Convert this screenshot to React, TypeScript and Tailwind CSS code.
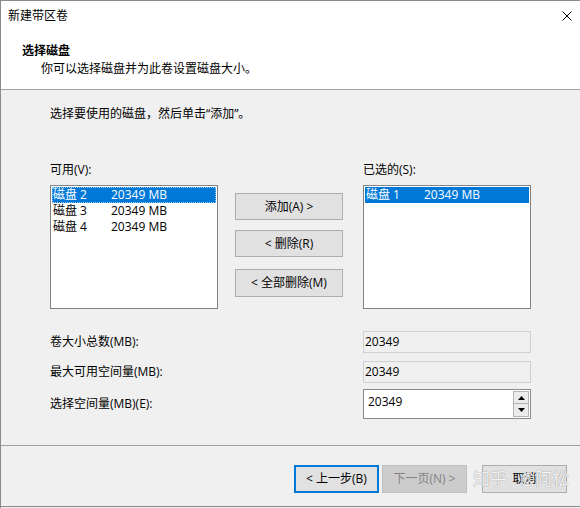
import React from "react";

const FONT = '"Open Sans", "Noto Sans CJK SC", sans-serif';

type Disk = { name: string; size: string };

const available: Disk[] = [
  { name: "磁盘 2", size: "20349 MB" },
  { name: "磁盘 3", size: "20349 MB" },
  { name: "磁盘 4", size: "20349 MB" },
];

const selected: Disk[] = [{ name: "磁盘 1", size: "20349 MB" }];

function DiskList({ items, focused }: { items: Disk[]; focused?: boolean }) {
  return (
    <div className="w-[168px] h-[124px] border border-[#828282] bg-white p-px">
      {items.map((d, i) => {
        const active = i === 0;
        return (
          <div
            key={d.name}
            className={
              "flex h-[16px] items-center leading-[16px] " +
              (active
                ? "bg-[#0078d7] text-white " +
                  (focused ? "outline outline-1 outline-dotted outline-[#9cc8ee] -outline-offset-1" : "")
                : "text-black")
            }
          >
            <span className="w-[59px] pl-px">{d.name}</span>
            <span>{d.size}</span>
          </div>
        );
      })}
    </div>
  );
}

function MoveButton({ label, className = "" }: { label: string; className?: string }) {
  return (
    <div
      className={
        "flex w-[108px] items-center justify-center border border-[#adadad] bg-[#e1e1e1] text-black " +
        className
      }
    >
      {label}
    </div>
  );
}

function SpinArrow({ up }: { up?: boolean }) {
  return (
    <svg width="7" height="4" viewBox="0 0 7 4">
      {up ? <polygon points="3.5,0 7,4 0,4" fill="#000" /> : <polygon points="0,0 7,0 3.5,4" fill="#000" />}
    </svg>
  );
}

export default function App() {
  return (
    <div
      className="relative flex h-[508px] w-[580px] flex-col overflow-hidden border-l border-t border-[#8a8a8a] bg-[#f0f0f0] text-[12px] leading-[16px] text-black"
      style={{ fontFamily: FONT }}
    >
      {/* header */}
      <div className="h-[89px] border-b border-[#a0a0a0] bg-white">
        <div className="flex h-[29px] items-center justify-between pl-[7px] pr-[8px]">
          <span>新建带区卷</span>
          <svg width="10" height="10" viewBox="0 0 10 10">
            <path d="M0.5 0.5 L9.5 9.5 M9.5 0.5 L0.5 9.5" stroke="#000" strokeWidth="1" />
          </svg>
        </div>
        <div className="mt-[13px] pl-[21px] font-bold">选择磁盘</div>
        <div className="mt-[2px] pl-[40px]">你可以选择磁盘并为此卷设置磁盘大小。</div>
      </div>

      {/* body */}
      <div className="flex h-[355px] flex-col pl-[49px]">
        <div className="mt-[16px]">选择要使用的磁盘，然后单击“添加”。</div>

        <div className="mt-[40px] flex">
          <div className="flex flex-col">
            <div className="h-[16px]">可用(V):</div>
            <div className="mt-[7px]">
              <DiskList items={available} focused />
            </div>
          </div>

          <div className="ml-[17px] flex flex-col pt-[31px]">
            <MoveButton label="添加(A) >" className="h-[27px]" />
            <MoveButton label="< 删除(R)" className="mt-[10px] h-[27px]" />
            <MoveButton label="< 全部删除(M)" className="mt-[12px] h-[28px]" />
          </div>

          <div className="ml-[20px] flex flex-col">
            <div className="h-[16px]">已选的(S):</div>
            <div className="mt-[7px]">
              <DiskList items={selected} />
            </div>
          </div>
        </div>

        <div className="mt-[22px] flex items-center">
          <div className="w-[313px]">卷大小总数(MB):</div>
          <div className="flex h-[22px] w-[168px] items-center border border-[#d0d0d0] bg-[#f0f0f0] pl-px">20349</div>
        </div>
        <div className="mt-[8px] flex items-center">
          <div className="w-[313px]">最大可用空间量(MB):</div>
          <div className="flex h-[22px] w-[168px] items-center border border-[#d0d0d0] bg-[#f0f0f0] pl-px">20349</div>
        </div>
        <div className="mt-[6px] flex items-center">
          <div className="w-[313px]">选择空间量(MB)(E):</div>
          <div className="flex h-[30px] w-[168px] border border-[#8a8a8a] bg-white">
            <div className="flex-1 pl-[4px] pt-[4px]">20349</div>
            <div className="flex w-[18px] flex-col p-px">
              <div className="flex h-[13px] items-center justify-center border border-[#b4b4b4] bg-[#ececec]">
                <SpinArrow up />
              </div>
              <div className="flex h-[13px] items-center justify-center border border-t-0 border-[#b4b4b4] bg-[#ececec]">
                <SpinArrow />
              </div>
            </div>
          </div>
        </div>
      </div>

      {/* footer */}
      <div className="flex flex-1 flex-col border-t border-[#a0a0a0]">
        <div className="mt-[19px] flex justify-end pr-[13px]">
          <div className="flex h-[28px] w-[85px] items-center justify-center border-2 border-[#0078d7] bg-[#e1e1e1]">
            &lt; 上一步(B)
          </div>
          <div className="ml-[3px] flex h-[28px] w-[85px] items-center justify-center border border-[#bfbfbf] bg-[#cccccc] text-[#838383]">
            下一页(N) &gt;
          </div>
          <div className="ml-[15px] flex h-[28px] w-[85px] items-center justify-center border border-[#adadad] bg-[#e1e1e1]">
            取消
          </div>
        </div>
        <div className="mt-auto mb-px h-px bg-[#8a8a8a]" />
      </div>

      {/* watermark */}
      <div className="pointer-events-none absolute left-[472px] top-[468px] flex items-center gap-[13px] whitespace-nowrap text-[17px] leading-[20px] text-white/90 [text-shadow:0_0_1px_rgba(0,0,0,0.5)]">
        <span>知乎</span>
        <span>@阿松</span>
      </div>
    </div>
  );
}
